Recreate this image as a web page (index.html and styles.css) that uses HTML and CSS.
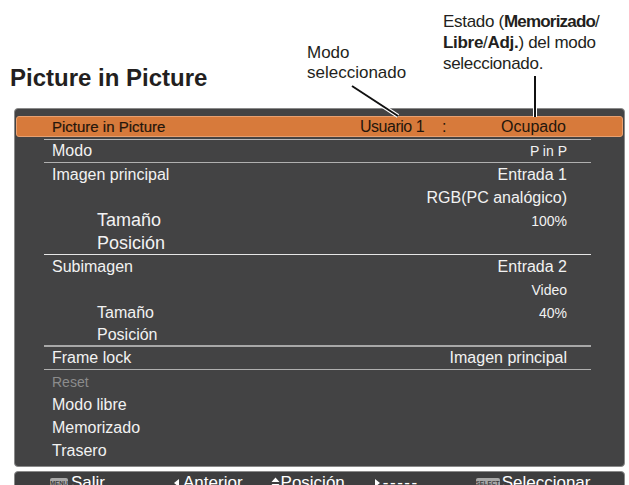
FILE: index.html
```html
<!DOCTYPE html>
<html lang="es">
<head>
    <meta charset="UTF-8">
    <title>Picture in Picture</title>
    <link rel="stylesheet" href="styles.css">
</head>
<body>
    <div class="top">
        <h1 class="title">Picture in Picture</h1>
        <div class="note note-mode">Modo<br>seleccionado</div>
        <div class="note note-state">Estado (<b class="tight">Memorizado</b>/<br><b>Libre</b>/<b>Adj.</b>) del modo<br>seleccionado.</div>
    </div>

    <div class="panel">
        <div class="panel-head">
            <span class="head-title">Picture in Picture</span>
            <span class="head-user">Usuario 1</span>
            <span class="head-colon">:</span>
            <span class="head-state">Ocupado</span>
        </div>
        <div class="rows">
            <div class="row sep"><span>Modo</span><span class="val small">P in P</span></div>
            <div class="row"><span>Imagen principal</span><span class="val">Entrada 1</span></div>
            <div class="row"><span></span><span class="val">RGB(PC analógico)</span></div>
            <div class="row"><span class="sub big">Tamaño</span><span class="val small">100%</span></div>
            <div class="row sep-light"><span class="sub big">Posición</span></div>
            <div class="row"><span>Subimagen</span><span class="val">Entrada 2</span></div>
            <div class="row"><span></span><span class="val small">Video</span></div>
            <div class="row"><span class="sub">Tamaño</span><span class="val small">40%</span></div>
            <div class="row sep-thick"><span class="sub">Posición</span></div>
            <div class="row sep"><span>Frame lock</span><span class="val">Imagen principal</span></div>
            <div class="row"><span class="dim">Reset</span></div>
            <div class="row"><span>Modo libre</span></div>
            <div class="row"><span>Memorizado</span></div>
            <div class="row"><span>Trasero</span></div>
        </div>
    </div>

    <div class="guide">
        <span class="guide-item guide-menu"><span class="key key-menu">MENU</span>Salir</span>
        <span class="guide-item guide-prev">
            <svg class="arrow" width="8" height="10" viewBox="0 0 8 10"><path d="M1 5 L6 1 L6 9 Z" fill="#fff"/></svg>Anterior
        </span>
        <span class="guide-item guide-pos">
            <svg class="updown" width="9" height="12" viewBox="0 0 9 12"><path d="M4.5 0.5 L8.5 5 L0.5 5 Z M0.5 7 L8.5 7 L4.5 11.5 Z" fill="#fff"/></svg>Posición
        </span>
        <span class="guide-item guide-next">
            <svg class="arrow" width="8" height="10" viewBox="0 0 8 10"><path d="M2 1 L7 5 L2 9 Z" fill="#fff"/></svg><span class="dashes">-----</span>
        </span>
        <span class="guide-item guide-sel"><span class="key key-select">SELECT</span>Seleccionar</span>
    </div>

    <svg class="leaders" width="629" height="140" viewBox="0 0 629 140">
        <line x1="352" y1="86" x2="398" y2="116" stroke="#fff" stroke-width="4"/>
        <line x1="352" y1="86" x2="398" y2="116" stroke="#111" stroke-width="2"/>
        <line x1="535" y1="76" x2="535" y2="117" stroke="#fff" stroke-width="4"/>
        <line x1="535" y1="76" x2="535" y2="117" stroke="#111" stroke-width="2"/>
    </svg>
</body>
</html>
```

FILE: styles.css
```css
body {
    margin: 0;
    width: 629px;
    height: 485px;
    overflow: hidden;
    background: #ffffff;
    font-family: "Liberation Sans", Arial, sans-serif;
    color: #231f20;
    position: relative;
}

.top {
    position: relative;
    height: 108px;
}

.title {
    margin: 0;
    padding: 64px 0 0 10px;
    font-size: 24px;
    font-weight: bold;
    line-height: 28px;
}

.note {
    position: absolute;
    font-size: 17px;
    line-height: 20px;
}

.note-mode {
    left: 307px;
    top: 43px;
}

.note-state {
    left: 443px;
    top: 11px;
    line-height: 21px;
    letter-spacing: -0.3px;
}

.note-state .tight {
    letter-spacing: -0.8px;
}

.leaders {
    position: absolute;
    left: 0;
    top: 0;
}

.panel {
    margin-left: 14px;
    width: 611px;
    height: 359px;
    box-sizing: border-box;
    background: #434344;
    border: 1px solid #8a8a8a;
    border-radius: 4px;
    padding-top: 7px;
}

.panel-head {
    display: flex;
    align-items: center;
    height: 21px;
    box-sizing: border-box;
    margin: 0 1px;
    padding: 0 56px 0 35px;
    background: #d77a3b;
    border: 1px solid #e8a070;
    border-radius: 3px;
    color: #24160c;
    font-size: 15px;
}

.head-title {
    flex: 1;
    -webkit-text-stroke: 0.2px #24160c;
}

.head-user {
    width: 82px;
    font-size: 16px;
    letter-spacing: -0.5px;
}

.head-colon {
    width: 59px;
    font-size: 16px;
}

.head-state {
    font-size: 16px;
}

.rows {
    margin: 2px 33px 0 29px;
    border-top: 1px solid #b8b8b8;
}

.row {
    display: flex;
    justify-content: space-between;
    align-items: center;
    height: 23px;
    box-sizing: border-box;
    padding: 0 24px 0 8px;
    color: #f2f2f2;
    font-size: 16px;
}

.row.sep {
    border-bottom: 1px solid #b0b0b0;
}

.row.sep-light {
    border-bottom: 1px solid #e6e6e6;
}

.row.sep-thick {
    border-bottom: 2px solid #a8a8a8;
}

.sub {
    padding-left: 45px;
}

.sub.big {
    font-size: 18px;
}

.val.small {
    font-size: 14px;
}

.dim {
    color: #8c8c8c;
    font-size: 14px;
}

.guide {
    margin: 4px 0 0 14px;
    width: 611px;
    height: 26px;
    box-sizing: border-box;
    background: #3e3e3f;
    border: 1px solid #8a8a8a;
    border-radius: 4px;
    color: #ffffff;
    font-size: 17px;
    display: flex;
    align-items: flex-start;
    padding-top: 2px;
}

.guide-item {
    display: flex;
    align-items: center;
    line-height: 18px;
    white-space: nowrap;
}

.guide-menu { margin-left: 35px; }
.guide-prev { margin-left: 68px; }
.guide-pos { margin-left: 28px; }
.guide-next { margin-left: 28px; }
.guide-sel { margin-left: 57px; }

.key {
    display: inline-block;
    box-sizing: border-box;
    height: 11px;
    background: #a8a8a8;
    color: #3a3a3a;
    font-size: 6px;
    font-weight: bold;
    line-height: 11px;
    text-align: center;
    border-radius: 2px;
    overflow: hidden;
}

.key-menu {
    width: 18px;
    margin-right: 3px;
}

.key-select {
    width: 24px;
    margin-right: 2px;
}

.arrow {
    margin-right: 2px;
}

.updown {
    margin-right: 1px;
}

.dashes {
    letter-spacing: 1.5px;
}
```
